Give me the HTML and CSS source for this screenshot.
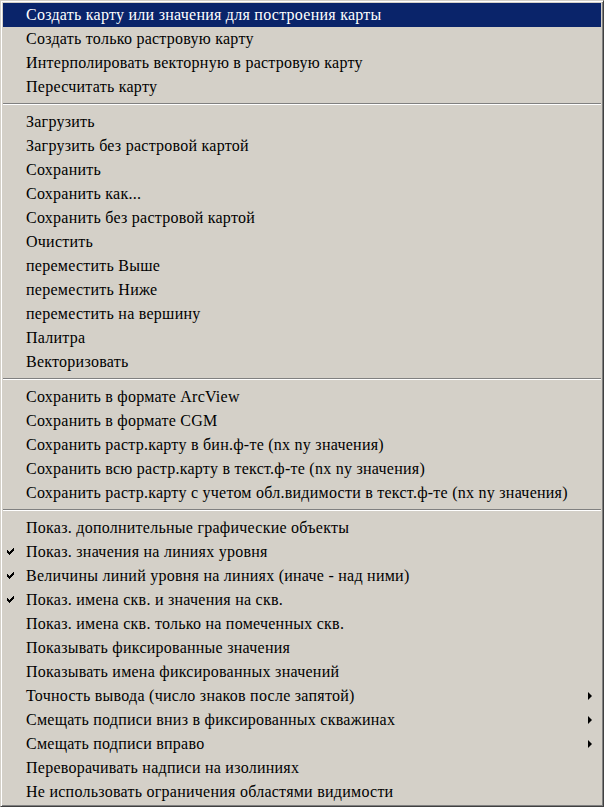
FILE: index.html
```html
<!DOCTYPE html>
<html lang="ru">
<head>
  <meta charset="UTF-8" />
  <title>Контекстное меню карты</title>
  <link rel="stylesheet" href="styles.css">
</head>
<body>
  <div class="menu">
    <div class="item active">Создать карту или значения для построения карты</div>
    <div class="item">Создать только растровую карту</div>
    <div class="item">Интерполировать векторную в растровую карту</div>
    <div class="item">Пересчитать карту</div>
    <div class="sep"></div>
    <div class="item">Загрузить</div>
    <div class="item">Загрузить без растровой картой</div>
    <div class="item">Сохранить</div>
    <div class="item">Сохранить как...</div>
    <div class="item">Сохранить без растровой картой</div>
    <div class="item">Очистить</div>
    <div class="item">переместить Выше</div>
    <div class="item">переместить Ниже</div>
    <div class="item">переместить на вершину</div>
    <div class="item">Палитра</div>
    <div class="item">Векторизовать</div>
    <div class="sep"></div>
    <div class="item">Сохранить в формате ArcView</div>
    <div class="item">Сохранить в формате CGM</div>
    <div class="item">Сохранить растр.карту в бин.ф-те (nx ny значения)</div>
    <div class="item">Сохранить всю растр.карту в текст.ф-те (nx ny значения)</div>
    <div class="item">Сохранить растр.карту с учетом обл.видимости в текст.ф-те (nx ny значения)</div>
    <div class="sep"></div>
    <div class="item">Показ. дополнительные графические объекты</div>
    <div class="item checked">Показ. значения на линиях уровня</div>
    <div class="item checked">Величины линий уровня на линиях (иначе - над ними)</div>
    <div class="item checked">Показ. имена скв. и значения на скв.</div>
    <div class="item">Показ. имена скв. только на помеченных скв.</div>
    <div class="item">Показывать фиксированные значения</div>
    <div class="item">Показывать имена фиксированных значений</div>
    <div class="item sub">Точность вывода (число знаков после запятой)</div>
    <div class="item sub">Смещать подписи вниз в фиксированных скважинах</div>
    <div class="item sub">Смещать подписи вправо</div>
    <div class="item">Переворачивать надписи на изолиниях</div>
    <div class="item">Не использовать ограничения областями видимости</div>
  </div>
</body>
</html>
```

FILE: styles.css
```css
body {
  margin: 0;
  background: #ffffff;
  font-family: "Liberation Serif", "Times New Roman", serif;
  font-size: 16px;
  color: #000;
}
.menu {
  width: 604px;
  box-sizing: border-box;
  background: #d4d0c8;
  border: 1px solid;
  border-color: #d4d0c8 #404040 #404040 #d4d0c8;
  box-shadow: inset 1px 1px #fff, inset -1px -1px #808080;
  padding: 2px;
}
.item {
  position: relative;
  height: 24px;
  line-height: 24px;
  padding-left: 23px;
  white-space: nowrap;
  letter-spacing: 0.25px;
}
.item.active {
  background: #0a246a;
  color: #fff;
}
.sep {
  height: 0;
  margin: 4px 0 5px;
  border-top: 1px solid #808080;
  border-bottom: 1px solid #fff;
}
.checked::before {
  content: "";
  position: absolute;
  left: 4px;
  top: 8px;
  width: 7px;
  height: 7px;
  background:
    linear-gradient(#000, #000) 6px 0 / 1px 3px no-repeat,
    linear-gradient(#000, #000) 5px 1px / 1px 3px no-repeat,
    linear-gradient(#000, #000) 4px 2px / 1px 3px no-repeat,
    linear-gradient(#000, #000) 3px 3px / 1px 3px no-repeat,
    linear-gradient(#000, #000) 2px 4px / 1px 3px no-repeat,
    linear-gradient(#000, #000) 1px 3px / 1px 3px no-repeat,
    linear-gradient(#000, #000) 0 2px / 1px 3px no-repeat;
}
.sub::after {
  content: "";
  position: absolute;
  right: 9px;
  top: 8px;
  border-left: 4px solid #000;
  border-top: 4px solid transparent;
  border-bottom: 4px solid transparent;
}
```
